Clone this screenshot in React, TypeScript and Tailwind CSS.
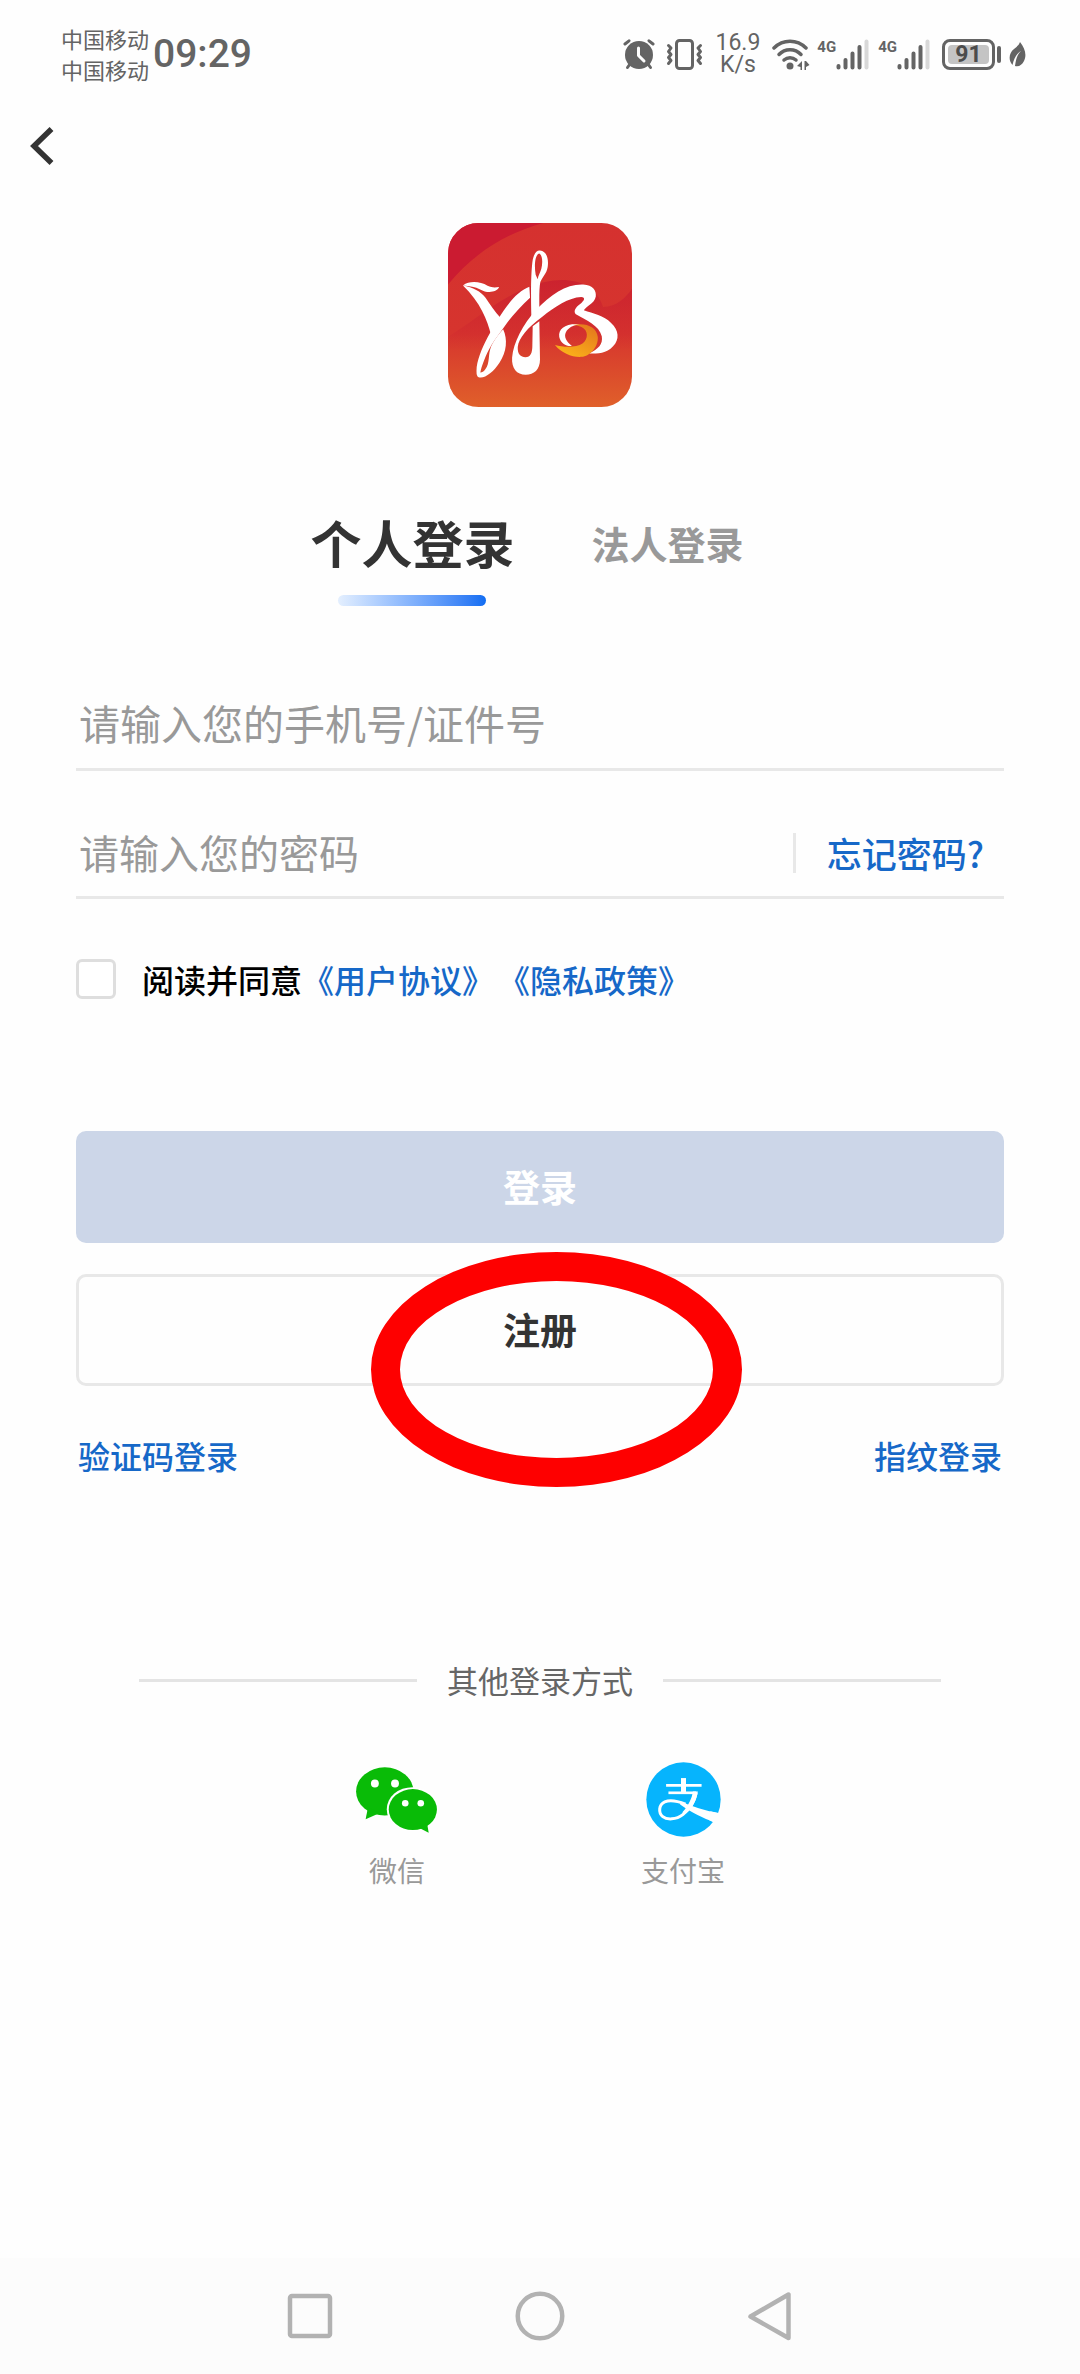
import { useState, type ReactNode } from 'react';

function AlarmIcon() {
  return (
    <svg viewBox="0 0 32 31" className="h-[31px] w-8" fill="none" stroke="#646464" strokeLinecap="round">
      <path d="M2 5 L6 1.8 M30 5 L26 1.8" strokeWidth="3" />
      <path d="M7 25 L4.5 28.500 M25 25 L27.500 28.500" strokeWidth="3" />
      <circle cx="16" cy="16" r="14" fill="#646464" stroke="none" />
      <path d="M15.500 9 V16.500 L21 22" stroke="#fefefe" strokeWidth="3" strokeLinejoin="round" />
    </svg>
  );
}

function VibrateIcon() {
  return (
    <svg viewBox="0 0 37 31" className="h-[31px] w-[37px]" fill="none" stroke="#646464" strokeLinecap="round" strokeLinejoin="round">
      <rect x="10.500" y="1.500" width="16" height="28" rx="3" strokeWidth="3" />
      <path d="M2.500 6.500 L5 9 L2.500 12.500 L5 15.500 L2.500 18.500 L5 21.500 L2.500 24.500" strokeWidth="3" />
      <path d="M34.500 6.500 L32 9 L34.500 12.500 L32 15.500 L34.500 18.500 L32 21.500 L34.500 24.500" strokeWidth="3" />
    </svg>
  );
}

function WifiIcon() {
  return (
    <svg viewBox="0 0 38 31" className="h-[31px] w-[38px]" fill="none" stroke="#646464" strokeLinecap="round">
      <path d="M2 9 C11 0 25 0 34 9" strokeWidth="3.500" />
      <path d="M7 15.500 C13 9 23 9 29 15.500" strokeWidth="3.500" />
      <path d="M12 21 C15.500 18 20.500 18 24 21" strokeWidth="3.500" />
      <circle cx="18" cy="27" r="3.500" fill="#646464" stroke="none" />
      <path d="M30 22 V31 H28.500 V28 L25 27 Z M32.500 22 H34 L37.500 26 L34 28 V31 H32.500 Z" fill="#646464" stroke="none" />
    </svg>
  );
}

function Signal() {
  return (
    <span className="flex items-start">
      <span className="text-[15px] leading-4 font-bold">4G</span>
      <svg viewBox="0 0 33 31" className="h-[31px] w-[33px]" stroke="#646464" strokeWidth="4" strokeLinecap="round">
        <path d="M2.500 27 V28.500 M9.500 21 V28.500 M16.500 14.500 V28.500 M23.500 8 V28.500" />
        <path d="M30.500 2.500 V28.500" stroke="#d8d8d8" />
      </svg>
    </span>
  );
}

function Battery() {
  return (
    <span className="flex items-center gap-0.5">
      <span className="flex h-[31px] w-[53px] rounded-lg border-[3px] border-[#646464] p-[3px]">
        <span className="flex flex-1 items-center justify-center rounded-sm bg-[#c4c4c4] text-[23px] leading-none font-bold text-[#4c4c4c]">
          91
        </span>
      </span>
      <span className="h-[17px] w-1 rounded-full bg-[#646464]" />
    </span>
  );
}

function LeafIcon() {
  return (
    <svg viewBox="0 0 17 27" className="h-[27px] w-[17px]">
      <path d="M11 1 C16 7 18 14 15 20 C13 24 10 26 6 25 C7 18 8 14 12 10 C7 13 5 18 3.500 24 C-1 19 0 12 5 8 C8 5.500 10 4 11 1 Z" fill="#646464" />
    </svg>
  );
}

function StatusBar() {
  return (
    <header className="flex h-[108px] items-center justify-between pr-[54px] pl-[61px] text-[#646464]">
      <div className="flex items-center gap-1">
        <div className="text-[22px] leading-[31px]">
          <p>中国移动</p>
          <p>中国移动</p>
        </div>
        <time className="font-['Roboto','Noto_Sans_CJK_SC',sans-serif] text-[39px] leading-none font-medium">09:29</time>
      </div>
      <div className="flex items-center font-['Roboto','Noto_Sans_CJK_SC',sans-serif]">
        <AlarmIcon />
        <span className="ml-[11px] flex"><VibrateIcon /></span>
        <div className="mx-3 text-center text-[23px] leading-[22px]">
          <p>16.9</p>
          <p>K/s</p>
        </div>
        <WifiIcon />
        <span className="ml-[7px] flex gap-[9px]">
          <Signal />
          <Signal />
        </span>
        <span className="mr-2 ml-3"><Battery /></span>
        <LeafIcon />
      </div>
    </header>
  );
}

function AppLogo() {
  return (
    <svg viewBox="53 37 554 554" className="size-[184px]" role="img" aria-label="湘">
      <defs>
        <linearGradient id="base" x1="0" y1="0" x2="0" y2="1">
          <stop offset="0" stopColor="#d5312f" />
          <stop offset="0.6" stopColor="#d6342e" />
          <stop offset="1" stopColor="#e0602a" />
        </linearGradient>
        <linearGradient id="band" x1="0" y1="0" x2="0" y2="1">
          <stop offset="0" stopColor="#c81d2f" />
          <stop offset="1" stopColor="#c81d2f" stopOpacity="0" />
        </linearGradient>
        <linearGradient id="gold" x1="1" y1="0" x2="0.3" y2="1">
          <stop offset="0" stopColor="#e2731d" />
          <stop offset="1" stopColor="#fbb21a" />
        </linearGradient>
        <clipPath id="tile">
          <rect x="53" y="37" width="554" height="554" rx="92" />
        </clipPath>
      </defs>
      <g clipPath="url(#tile)">
        <rect x="53" y="37" width="554" height="554" fill="url(#base)" />
        <path d="M53 37 H340 C220 70 130 130 53 222 Z" fill="#cb1b31" />
        <path d="M53 380 C150 320 250 225 370 210 C440 202 500 225 520 290 C560 290 590 260 607 235 V420 H53 Z" fill="url(#band)" opacity="0.75" />
      </g>
      <g fill="#fff">
        <path d="M98 225 C118 210 150 213 172 226 C186 233 197 231 207 230 C199 247 170 249 150 237 C135 229 118 227 98 225 Z" />
        <path d="M98 225 C128 230 152 243 166 262 C180 282 195 306 211 322 L182 372 C172 330 150 275 98 225 Z" />
        <path d="M298 229 L300 262 C270 290 244 318 222 350 C202 378 180 405 166 440 C156 465 150 480 150 497 L140 495 C134 465 152 420 172 382 C204 322 250 245 298 229 Z" />
        <path d="M219 357 C233 387 230 425 208 458 C190 486 165 505 148 502 C140 501 138 492 142 480 C150 494 162 486 170 470 C180 448 172 425 188 398 C198 382 208 368 219 357 Z" />
        <path fillRule="evenodd" d="M304 320 C302 240 303 190 307 155 C311 128 320 119 330 120 C350 122 357 145 353 170 C350 190 336 200 331 215 C327 235 328 270 328 302 Z M317 193 C312 165 315 132 328 129 C337 134 339 155 334 175 C330 188 325 195 323 206 Z" />
        <path d="M328 333 L330 448 C330 478 312 494 287 494 C260 494 244 475 246 442 C250 398 278 342 320 297 C362 252 410 220 460 222 C490 224 500 240 498 258 C494 280 468 287 462 300 C490 310 522 316 544 338 C568 360 570 388 550 408 C530 430 505 430 478 430 C506 416 520 402 516 378 C508 346 470 330 438 312 C430 304 436 292 450 282 C464 270 468 262 454 260 C416 262 376 288 336 320 C292 352 266 384 263 410 C262 432 272 440 286 441 C302 441 307 428 307 405 L308 348 Z" />
        <path d="M450 342 C408 338 384 356 388 380 C392 400 410 409 426 407 C410 395 401 380 408 366 C415 352 430 345 450 342 Z" />
      </g>
      <path d="M428 344 C470 336 500 350 504 380 C506 410 480 438 455 440 C428 442 394 428 375 404 C402 412 440 412 458 400 C476 386 476 360 455 350 C446 346 438 345 428 344 Z" fill="url(#gold)" />
    </svg>
  );
}

function WechatIcon() {
  return (
    <svg viewBox="48 50 248 200" className="h-[66px] w-[82px]" fill="#09bb07">
      <ellipse cx="135" cy="124" rx="87" ry="73" />
      <path d="M84 172 L77 208 L118 190 Z" />
      <circle cx="105" cy="100" r="12" fill="#fff" />
      <circle cx="166" cy="100" r="12" fill="#fff" />
      <ellipse cx="219" cy="178" rx="78" ry="67" fill="#fff" />
      <ellipse cx="220" cy="179" rx="73" ry="62" />
      <path d="M240 235 L268 249 L263 220 Z" />
      <circle cx="197" cy="160" r="10" fill="#fff" />
      <circle cx="244" cy="160" r="10" fill="#fff" />
    </svg>
  );
}

function AlipayIcon() {
  return (
    <svg viewBox="48 39 224 224" className="size-[75px]" fill="none" stroke="#fff">
      <circle cx="160" cy="151" r="111" fill="#06b4fd" stroke="none" />
      <path d="M108 109 H214" strokeWidth="8" />
      <path d="M160 87 V131" strokeWidth="15" />
      <path d="M115 131 H198" strokeWidth="8" />
      <path d="M198 131 C192 158 176 182 158 196 C138 212 110 212 98 202 C84 190 86 166 104 158 C124 150 146 157 166 165" strokeWidth="9" />
      <path d="M203 127 H188 C186 145 175 170 156 190 L168 192 C188 175 199 152 203 127 Z" fill="#fff" stroke="none" />
      <path d="M150 156 C185 172 225 183 264 192 L251 218 C220 208 185 190 150 166 Z" fill="#fff" stroke="none" />
      <path d="M240 186 L276 194 L262 226 L236 212 Z" fill="#fefefe" stroke="none" />
    </svg>
  );
}

function Field({ children }: { children: ReactNode }) {
  return <div className="flex h-[90px] items-center border-b-[3px] border-[#e8e8e8]">{children}</div>;
}

export default function App() {
  const [agreed, setAgreed] = useState(false);

  return (
    <div className="flex min-h-screen flex-col bg-[#fefefe] font-['Noto_Sans_CJK_SC',sans-serif]" lang="zh-CN">
      <StatusBar />
      <div className="flex h-[76px] items-center pl-[30px]">
        <button type="button" aria-label="返回">
          <svg viewBox="0 0 24 38" className="h-[38px] w-6" fill="none" stroke="#333" strokeWidth="5.500">
            <path d="M21.500 2 L4 19 L21.500 36" />
          </svg>
        </button>
      </div>

      <main className="flex flex-1 flex-col px-[76px] pt-[39px]">
        <div className="flex justify-center">
          <AppLogo />
        </div>

        <div className="mt-[107px] flex items-start justify-center gap-[77px] pr-[26px]" role="tablist">
          <button type="button" role="tab" aria-selected="true" className="flex flex-col items-center text-[51px] leading-[57px] font-bold text-[#333]">
            个人登录
            <span className="mt-6 h-[11px] w-[148px] rounded-full bg-linear-to-r from-[#e4effe] to-[#0f6df2]" />
          </button>
          <button type="button" role="tab" aria-selected="false" className="text-[38px] leading-[57px] font-bold text-[#999]">
            法人登录
          </button>
        </div>

        <form className="mt-[75px]" onSubmit={(e) => e.preventDefault()}>
          <Field>
            <input
              type="text"
              aria-label="手机号/证件号"
              placeholder="请输入您的手机号/证件号"
              className="h-full min-w-0 flex-1 bg-transparent pb-1.5 pl-[3px] text-[41px] outline-none placeholder:text-[#999]"
            />
          </Field>
          <div className="h-[38px]" />
          <Field>
            <input
              type="password"
              aria-label="密码"
              placeholder="请输入您的密码"
              className="h-full min-w-0 flex-1 bg-transparent pb-0.5 pl-[3px] text-[40px] outline-none placeholder:text-[#999]"
            />
            <a href="#forgot" className="border-l-[3px] border-[#e8e8e8] pr-[20px] pl-[31px] text-[35px] leading-10 font-medium text-[#1668c8]">
              忘记密码?
            </a>
          </Field>

          <div className="mt-[59px] flex items-center text-[32px] leading-[42px] font-medium">
            <input
              id="agree"
              type="checkbox"
              checked={agreed}
              onChange={(e) => setAgreed(e.target.checked)}
              className="size-10 appearance-none rounded-md border-[3px] border-[#dedede] bg-white checked:bg-[#1668c8]"
            />
            <label htmlFor="agree" className="ml-[26px] text-black">阅读并同意</label>
            <a href="#terms" className="text-[#1668c8]">《用户协议》</a>
            <a href="#privacy" className="ml-1 text-[#1668c8]">《隐私政策》</a>
          </div>

          <button type="submit" className="mt-[131px] h-28 w-full rounded-[10px] bg-[#ccd6e8] text-[37px] font-bold text-white">
            登录
          </button>
          <div className="relative mt-[31px]">
            <button type="button" className="h-28 w-full rounded-[10px] border-[3px] border-[#e8e8e8] text-[37px] font-bold text-[#333]">
              注册
            </button>
            <div className="pointer-events-none absolute inset-x-[295px] -top-[22px] right-auto h-[235px] w-[40%] rounded-[50%] border-[29px] border-[#fe0000]" />
          </div>
        </form>

        <div className="mt-[45px] flex justify-between px-0.5 text-[32px] leading-[48px] font-medium text-[#1668c8]">
          <a href="#sms">验证码登录</a>
          <a href="#fingerprint">指纹登录</a>
        </div>

        <div className="mt-[177px] flex items-center gap-[30px] px-[63px]">
          <span className="h-[3px] flex-1 bg-[#e4e4e4]" />
          <h2 className="text-[31px] leading-[48px] text-[#666]">其他登录方式</h2>
          <span className="h-[3px] flex-1 bg-[#e4e4e4]" />
        </div>

        <div className="mt-[58px] grid grid-cols-2 px-[178px] text-[28px] leading-10 text-[#999]">
          <button type="button" className="flex flex-col items-center gap-[13px]">
            <span className="flex h-[75px] items-center"><WechatIcon /></span>
            微信
          </button>
          <button type="button" className="flex flex-col items-center gap-[13px]">
            <AlipayIcon />
            支付宝
          </button>
        </div>
      </main>

      <nav className="grid h-[116px] grid-cols-3 place-items-center bg-[#fcfcfc] px-[195px]">
        <button type="button" aria-label="最近任务">
          <svg viewBox="0 0 50 50" className="size-[50px]" fill="none" stroke="#b2b2b2" strokeWidth="4.500">
            <rect x="5" y="5" width="40" height="40" rx="2" />
          </svg>
        </button>
        <button type="button" aria-label="主屏幕">
          <svg viewBox="0 0 50 50" className="size-[50px]" fill="none" stroke="#b2b2b2" strokeWidth="4.500">
            <circle cx="25" cy="25" r="22.250" />
          </svg>
        </button>
        <button type="button" aria-label="返回上一页">
          <svg viewBox="0 0 50 50" className="size-[50px]" fill="none" stroke="#b2b2b2" strokeWidth="4.500" strokeLinejoin="round">
            <path d="M43.500 3.500 V47 L5.500 25.500 Z" />
          </svg>
        </button>
      </nav>
    </div>
  );
}
